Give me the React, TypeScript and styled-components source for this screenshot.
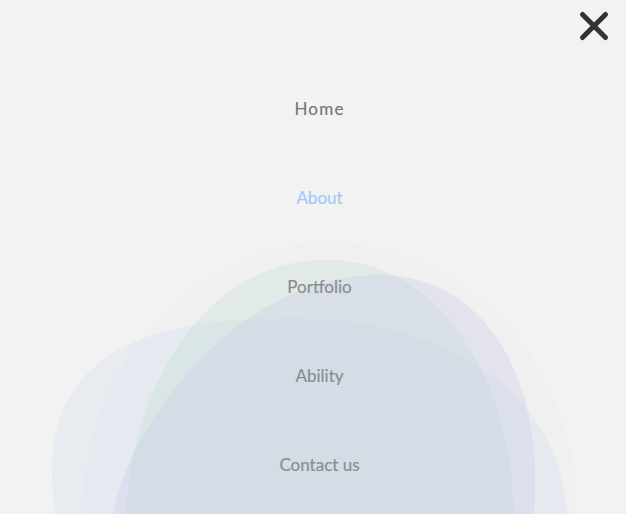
import React from "react";
import styled, { createGlobalStyle } from "styled-components";

const Global = createGlobalStyle`
  html, body { margin: 0; padding: 0; }
  body { background: #f2f2f2; font-family: Lato, "Open Sans", sans-serif; }
`;

const Screen = styled.div`
  position: relative;
  width: 626px;
  height: 514px;
  overflow: hidden;
  background: #f2f2f2;
`;

const Blobs = styled.svg`
  position: absolute;
  inset: 0;
  width: 626px;
  height: 514px;
  z-index: 0;
`;

const CloseButton = styled.button`
  position: absolute;
  top: 10px;
  right: 16px;
  width: 32px;
  height: 32px;
  padding: 0;
  border: 0;
  background: transparent;
  cursor: pointer;
  z-index: 2;
  display: flex;
  align-items: center;
  justify-content: center;
`;

const Nav = styled.nav`
  position: relative;
  z-index: 1;
  display: flex;
  flex-direction: column;
  align-items: center;
  padding-top: 64px;
  margin-left: 13px;
`;

const NavLink = styled.a<{ $active?: boolean; $spaced?: boolean }>`
  display: block;
  height: 89px;
  line-height: 89px;
  font-family: Lato, "Open Sans", sans-serif;
  font-size: 17px;
  text-decoration: none;
  letter-spacing: ${(p) => (p.$spaced ? "1.2px" : "0")};
  color: ${(p) => (p.$active ? "#9ccbf8" : p.$spaced ? "#757578" : "#8a8b90")};
  -webkit-text-stroke: 0.15px currentColor;
`;

const items = [
  { label: "Home", spaced: true },
  { label: "About", active: true },
  { label: "Portfolio" },
  { label: "Ability" },
  { label: "Contact us" },
];

export default function App() {
  return (
    <Screen>
      <Global />
      <Blobs viewBox="0 0 626 514" aria-hidden>
        <ellipse cx="330" cy="514" rx="248" ry="272" fill="rgb(215,222,232)" fillOpacity="0.05" />
        <path
          d="M55 514 C 38 390, 90 318, 290 318 C 440 316, 560 390, 567 514 Z"
          fill="rgb(196,213,236)"
          fillOpacity="0.22"
        />
        <path
          d="M127 514 C 125 420, 190 260, 325 260 C 450 258, 515 400, 513 514 Z"
          fill="rgb(192,222,205)"
          fillOpacity="0.3"
        />
        <path
          d="M113 514 C 130 420, 240 275, 380 275 C 480 275, 545 370, 534 514 Z"
          fill="rgb(200,198,232)"
          fillOpacity="0.3"
        />
      </Blobs>
      <CloseButton aria-label="Close menu">
        <svg width="32" height="32" viewBox="0 0 32 32">
          <path d="M4.5 4.5 L27.5 27.5 M27.5 4.5 L4.5 27.5" stroke="#333" strokeWidth="5" strokeLinecap="round" />
        </svg>
      </CloseButton>
      <Nav>
        {items.map((it) => (
          <NavLink key={it.label} href="#" $active={it.active} $spaced={it.spaced}>
            {it.label}
          </NavLink>
        ))}
      </Nav>
    </Screen>
  );
}
